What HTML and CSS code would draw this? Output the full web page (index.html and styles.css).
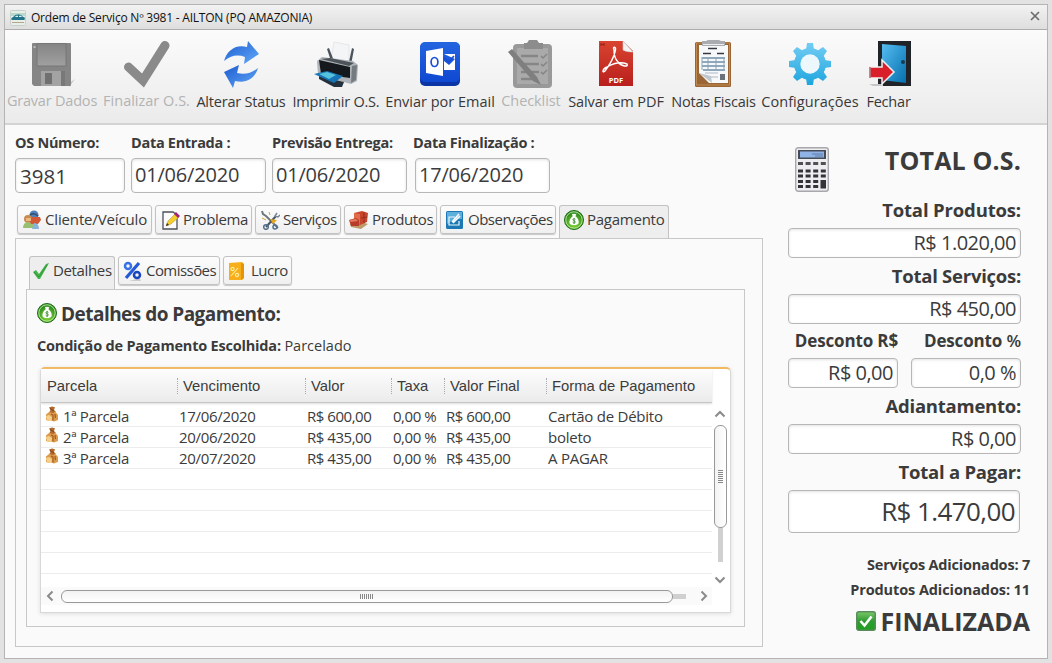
FILE: index.html
```html
<!DOCTYPE html>
<html lang="pt-BR">
<head>
<meta charset="utf-8">
<title>Ordem de Serviço Nº 3981</title>
<link rel="stylesheet" href="styles.css">
</head>
<body>
<svg width="0" height="0" class="defs" aria-hidden="true">
  <defs>
    <linearGradient id="gray" x1="0" y1="0" x2="0" y2="1"><stop offset="0" stop-color="#858585"/><stop offset="1" stop-color="#a0a0a0"/></linearGradient>
    <linearGradient id="blue" x1="0" y1="0" x2="1" y2="1"><stop offset="0" stop-color="#1c5bd0"/><stop offset="1" stop-color="#63aaf8"/></linearGradient>
    <linearGradient id="outlook" x1="0" y1="0" x2="0" y2="1"><stop offset="0" stop-color="#2465df"/><stop offset="1" stop-color="#1048d2"/></linearGradient>
    <linearGradient id="red" x1="0" y1="0" x2="0" y2="1"><stop offset="0" stop-color="#d9442f"/><stop offset="1" stop-color="#b81f1d"/></linearGradient>
    <linearGradient id="sky" gradientUnits="userSpaceOnUse" x1="0" y1="3" x2="0" y2="45"><stop offset="0" stop-color="#73cdf3"/><stop offset="1" stop-color="#1ea5de"/></linearGradient>
    <linearGradient id="door" x1="0" y1="0" x2="1" y2="1"><stop offset="0" stop-color="#55bdf0"/><stop offset="1" stop-color="#066fae"/></linearGradient>
    <radialGradient id="green" cx=".5" cy=".7" r=".6"><stop offset="0" stop-color="#8ede3c"/><stop offset="1" stop-color="#26851c"/></radialGradient>
    <linearGradient id="check" x1="0" y1="0" x2="0" y2="1"><stop offset="0" stop-color="#7cc86a"/><stop offset=".5" stop-color="#2f9c33"/><stop offset="1" stop-color="#1fa01f"/></linearGradient>
    <symbol id="money" viewBox="0 0 20 20">
      <circle cx="10" cy="10" r="9.5" fill="url(#green)" stroke="#1c6a1a"/>
      <circle cx="10" cy="10" r="8.2" fill="none" stroke="#c5eda0" stroke-width=".9"/>
      <path d="M7.7 3.6 9 4.2 10 3.4 11.2 4.2 12.5 3.6 11.5 6.2 C14 8 15 10.5 14.6 13 C14.2 15.7 5.8 15.7 5.5 13 C5.1 10.5 6.2 8 8.7 6.2Z" fill="#fff"/>
      <path d="M11.4 9.3C10.9 8.5 9 8.6 8.9 9.7C8.8 11 11.5 10.6 11.4 12C11.3 13.2 9.1 13.2 8.6 12.2M10.1 8v6" fill="none" stroke="#3f8e35" stroke-width=".9"/>
    </symbol>
    <symbol id="bag" viewBox="0 0 14 16">
      <path d="M4 1.5 7 .5 10 1.2 9 4 11 6 8 7.5 4 6.5 5.5 4Z" fill="#b4682a"/>
      <path d="M1 8.5 4 6 8 7 10.5 6 13 9 13 14 9 15.5 5 14 4 15 1 14Z" fill="#dc9b4c"/>
      <path d="M1 10 4 9 7 11 6.5 15 2 14.5Z" fill="#f4d08a"/>
      <path d="M6 8 8 9 8 14.5M10 8 10.5 12" fill="none" stroke="#a65a22" stroke-width="1.2"/>
      <path d="M5 2.5 9 5" stroke="#7c431b" stroke-width="1"/>
    </symbol>
  </defs>
</svg>

<div class="window">
  <header class="titlebar">
    <svg class="app-icon" viewBox="0 0 16 16"><rect x=".5" y=".5" width="15" height="15" rx="1" fill="#e8eee8" stroke="#c9cfc9"/><path d="M0 3h16v3H0z" fill="#bcd8cc"/><path d="M1 9C2 7 4 7 5 5.3C7 4.2 11 4.3 12.5 6.5L15 7.8 14.5 10H2Z" fill="#23748a"/><path d="M5 7 6 5.8H8V7ZM9 5.8h2L12 7H9Z" fill="#d5f2f0"/><path d="M2 12.5h12" stroke="#b5a68f"/></svg>
    <span class="title">Ordem de Serviço Nº 3981 - AILTON (PQ AMAZONIA)</span>
    <svg class="close" viewBox="0 0 10 10"><path d="M1 1 9 9M9 1 1 9" stroke="#6c6c6c" stroke-width="1.7"/></svg>
  </header>

  <nav class="toolbar">
    <a class="tool off">
      <svg viewBox="0 0 48 48"><path d="M40 44 47 39 41 47Z" fill="#c6c6c6"/><path d="M4 4Q4 3 5 3H42Q43 3 43 4V45Q43 46 42 46H6L4 44Z" fill="#858585"/><path d="M9 3.5H38V26H9Z" fill="url(#gray)" stroke="#777"/><path d="M13 31H33V46H13Z" fill="#a3a3a3"/><path d="M17 33h7v11h-7z" fill="#707070"/><path d="M33 31h4v15h-4z" fill="#787878"/><path d="M5.5 6h2v2h-2z" fill="#bbb"/></svg>
      <span class="t1">Gravar Dados</span></a>
    <a class="tool off">
      <svg viewBox="0 0 48 48"><path d="M5.500 27 20 40.500 42 5.500" fill="none" stroke="#8a8a8a" stroke-width="9" stroke-linecap="round" stroke-linejoin="miter"/></svg>
      <span class="t2">Finalizar O.S.</span></a>
    <a class="tool">
      <svg viewBox="0 0 48 48"><path d="M7 21C10 11 18 4 30 7L31 1 42 14 27 24 28 17C20 14 13 16 7 21Z" fill="url(#blue)"/><path d="M41 28C38 38 30 44 18 41L16 48 7 32 22 25 20 33C28 35 35 33 41 28Z" fill="url(#blue)"/></svg>
      <span class="t3">Alterar Status</span></a>
    <a class="tool">
      <svg viewBox="0 0 48 48"><path d="M22 2 37 5 37 26 19 20Z" fill="#f4f5f7" stroke="#d9dce0" stroke-width=".6"/><path d="M15 9 17 8 22 21 19 21ZM40 8 42 9 39 25 36 26Z" fill="#4b535b"/><path d="M5 21 10 17 41 21 46 25 45 41 39 44 6 35Z" fill="#aeb4b9"/><path d="M7 20 38 27 38 38 9 34Z" fill="#15191d"/><path d="M9 19 37 26 42 23 18 18Z" fill="#4c5359"/><path d="M40 26 45 25 44 40 39 43Z" fill="#747b81"/><path d="M7 36 32 42 30 47 22 47 7 39Z" fill="#24313c"/><path d="M2 34 15 31 31 36 22 43Z" fill="#1774b4"/><path d="M7 34 15 32 24 35 17 39Z" fill="#55c2dd"/></svg>
      <span class="t4">Imprimir O.S.</span></a>
    <a class="tool">
      <svg viewBox="0 0 48 48"><rect x="4" y="3" width="40" height="43" rx="5" fill="#0b35a4"/><rect x="4" y="2" width="40" height="40" rx="5" fill="url(#outlook)"/><path d="M10 11 27 8V36L10 33Z" fill="#fff"/><path d="M28 14H39V30H28V21L33 25 39 19" fill="#fff"/><path d="M28 17.500 32.500 22 38 16" fill="none" stroke="#174fd6" stroke-width="1.700"/><ellipse cx="18.500" cy="22" rx="3.400" ry="4.500" fill="none" stroke="#174fd6" stroke-width="1.700"/></svg>
      <span class="t5">Enviar por Email</span></a>
    <a class="tool off">
      <svg viewBox="0 0 48 48"><rect x="6" y="4" width="39" height="44" rx="4" fill="#999"/><rect x="10" y="8" width="31" height="36" fill="#aaa"/><path d="M17 3H20L22 0H30L32 3H36V9H17Z" fill="#8c8c8c"/><path d="M14 16H31M14 24H32M14 32H32M14 39H25" stroke="#868686" stroke-width="2.500"/><path d="M34 16 36 18 40 14M34 24 36 26 40 22M34 32 36 34 40 30" stroke="#858585" fill="none" stroke-width="1.500"/><path d="M1 12 5 9 30 37 34 45 26 41Z" fill="#7f7f7f"/></svg>
      <span class="t6">Checklist</span></a>
    <a class="tool">
      <svg viewBox="0 0 48 48"><path d="M7 1H31L41 11V46H7Z" fill="url(#red)"/><path d="M31 1 41 12Q34 12 31 10Z" fill="#f3f3f3" stroke="#ccc" stroke-width=".6"/><path d="M9 6V3.500L10.500 5 12 3.500V6" fill="none" stroke="#8b1c1a"/><path d="M22 10C20 6 25 6 23 12C21 20 16 27 13 31C10 34 10 29 15 27C22 23 30 22 35 24C37 27 30 27 26 22C22 18 22 14 22 10Z" fill="none" stroke="#fff" stroke-width="1.400"/><text x="24" y="43" class="pdf" text-anchor="middle">PDF</text></svg>
      <span class="t7">Salvar em PDF</span></a>
    <a class="tool">
      <svg viewBox="0 0 48 48"><rect x="5" y="2" width="36" height="45" rx="1.500" fill="#9b6635"/><rect x="6.500" y="3" width="33" height="42" fill="none" stroke="#c18a51"/><path d="M9 5H38V43H19L9 33Z" fill="#f7f8fa"/><path d="M12 1H16L18 0H29L31 1H35V6H12Z" fill="#a9abb0"/><path d="M13 4.500h21" stroke="#eee"/><path d="M18 8.500H27M13 13.500H21M27 13.500H34" stroke="#343a42" stroke-width="1.600"/><path d="M12 18H35M12 22H35M12 26H35M13 30H35" stroke="#6f8da7" stroke-width="1.500"/><path d="M12 17V30M18 17V31M26 17V31M34 17V31" stroke="#8ba5ba"/><path d="M15 33H28M19 37H28" stroke="#b1bac4"/><path d="M9 33 21 36 22 43Z" fill="#bfc6cc"/><path d="M30 34h5v6h-5z" fill="#6c7279"/></svg>
      <span class="t8">Notas Fiscais</span></a>
    <a class="tool">
      <svg viewBox="0 0 48 48"><g fill="url(#sky)"><circle cx="24" cy="24" r="16"/><path d="M21 3H27L28 10H20ZM20 38H28L27 45H21ZM3 21 10 20V28L3 27ZM38 20 45 21V27L38 28Z"/><path d="M7 11 11 7 17 11 11 17ZM37 7 41 11 37 17 31 11ZM41 37 37 41 31 37 37 31ZM11 41 7 37 11 31 17 37Z"/></g><circle cx="24" cy="24" r="9.700" fill="#edf8fd"/></svg>
      <span class="t9">Configurações</span></a>
    <a class="tool">
      <svg viewBox="0 0 48 48"><path d="M13 1H46V46H13Z" fill="#202328"/><path d="M17 4 41 6V43L17 40Z" fill="url(#door)"/><circle cx="38" cy="22" r="2" fill="#173b50"/><path d="M4 44H18V46H8Z" fill="#c5c5c5"/><path d="M5 27H17V20L29 32 17 44V38H5Z" fill="#d9202a" stroke="#f1f1f1" stroke-width="1.500"/><path d="M5 27V38" stroke="#901a20"/></svg>
      <span class="t10">Fechar</span></a>
  </nav>

  <main class="content">
    <section class="left">
      <div class="fields">
        <label class="field f1"><span>OS Número:</span><b class="input">3981</b></label>
        <label class="field f2"><span>Data Entrada :</span><b class="input">01/06/2020</b></label>
        <label class="field f3"><span>Previsão Entrega:</span><b class="input">01/06/2020</b></label>
        <label class="field f4"><span>Data Finalização :</span><b class="input">17/06/2020</b></label>
      </div>

      <div class="tabs main-tabs">
        <div class="tab m1"><svg viewBox="0 0 20 20"><circle cx="12" cy="5" r="4.500" fill="#4e82bd"/><circle cx="6" cy="9" r="4" fill="#c78b4d"/><path d="M1 18Q1 12 7 12T13 18Z" fill="#98bf70"/><path d="M7 10 10 7H18L19 10 16 14H9Z" fill="#d25836"/><path d="M4 8h5v3H4z" fill="#e8b985"/><path d="M12 13Q17 13 17 19H10Z" fill="#8ab2d8"/><path d="M8 5Q12 2 16 6" stroke="#354b68" stroke-width="1.500" fill="none"/></svg><span>Cliente/Veículo</span></div>
        <div class="tab m2"><svg viewBox="0 0 20 20"><path d="M3 2H13L17 5V19H3Z" fill="#fcfcff" stroke="#4d5058" stroke-width="1.300"/><path d="M6 16 8 11 15 4 19 7 11 14Z" fill="#f4ce2d" stroke="#af8c24" stroke-width=".5"/><path d="M14 4 16 2 20 6 18 8Z" fill="#9e247e"/><path d="M6 16 7 13 9 15Z" fill="#333"/></svg><span>Problema</span></div>
        <div class="tab m3"><svg viewBox="0 0 20 20"><path d="M2 1 3 4 6 6 18 18" stroke="#6f7880" stroke-width="2" fill="none"/><path d="M6 17 16 6" stroke="#4c5661" stroke-width="2"/><path d="M17 3 15 6 18 7 20 5" fill="none" stroke="#758494" stroke-width="1.500"/><path d="M10 9 17 10 13 14Z" fill="#e4a622"/><circle cx="6" cy="17" r="2.300" fill="none" stroke="#54708f" stroke-width="1.500"/><circle cx="15" cy="17" r="2" fill="none" stroke="#54708f" stroke-width="1.500"/><path d="M2 8 6 10M9 2 10 5" stroke="#caa24a"/></svg><span>Serviços</span></div>
        <div class="tab m4"><svg viewBox="0 0 20 20"><path d="M1 14 9 11 19 14 12 19 2 17Z" fill="#bd9a69"/><path d="M5 3 13 1 19 3 18 12 11 15 5 11Z" fill="#c8452d"/><path d="M5 3 11 4 11 14 5 11Z" fill="#e16b4a"/><path d="M0 10 7 8 10 10V16L2 16Z" fill="#b83c29"/><path d="M0 10 7 9 9 11 2 12Z" fill="#e27a5e"/><path d="M12 8 18 7M15 2V13" stroke="#93301f"/></svg><span>Produtos</span></div>
        <div class="tab m5"><svg viewBox="0 0 20 20"><rect x="1" y="1" width="17" height="18" rx="1.500" fill="#1c78b5"/><path d="M2 2H17V9Q8 9 2 14Z" fill="#5db0dc"/><path d="M14 11V15H4V7H10M5 15" fill="none" stroke="#e9f5fc" stroke-width="1.200"/><path d="M7 12 14 4M8 13 15 6" stroke="#fff" stroke-width="1.500"/></svg><span>Observações</span></div>
        <div class="tab m6 active"><svg><use href="#money"/></svg><span>Pagamento</span></div>
      </div>

      <div class="panel">
        <div class="tabs sub-tabs">
          <div class="tab s1 active"><svg viewBox="0 0 20 20"><path d="M1 11 4 9 7 13 14 3 17 2 8 18 6 18Z" fill="#46b449"/><path d="M2 11 7 16 15 4" stroke="#2a9039" fill="none" stroke-width=".8"/></svg><span>Detalhes</span></div>
          <div class="tab s2"><svg viewBox="0 0 20 20"><path d="M6 20H18L17 17Z" fill="#cdcdd0"/><circle cx="5" cy="5" r="3" fill="none" stroke="#3871e5" stroke-width="2.500"/><circle cx="14" cy="14" r="3" fill="none" stroke="#1746be" stroke-width="2.500"/><path d="M3 17 16 2" stroke="#245ad5" stroke-width="3.200"/></svg><span>Comissões</span></div>
          <div class="tab s3"><svg viewBox="0 0 20 20"><path d="M1 2 14 1 16 3V17L14 19H1Z" fill="#f8ae1b"/><path d="M13 2 16 3V17L13 19Z" fill="#e49406"/><g fill="none" stroke="#fff0a0" stroke-width="1.100"><circle cx="4.500" cy="8" r="1.600"/><circle cx="9" cy="14" r="1.600"/><path d="M3 15 10 7"/></g></svg><span>Lucro</span></div>
        </div>

        <div class="subpanel">
          <h2 class="heading"><svg><use href="#money"/></svg><span>Detalhes do Pagamento:</span></h2>
          <p class="condition"><strong>Condição de Pagamento Escolhida:</strong> <span>Parcelado</span></p>

          <div class="table">
            <div class="grid-area">
              <div class="row head"><span>Parcela</span><span>Vencimento</span><span>Valor</span><span>Taxa</span><span>Valor Final</span><span>Forma de Pagamento</span></div>
              <div class="rows">
                <div class="row"><span><svg><use href="#bag"/></svg>1ª Parcela</span><span>17/06/2020</span><span class="money">R$ 600,00</span><span class="money">0,00 %</span><span class="money">R$ 600,00</span><span>Cartão de Débito</span></div>
                <div class="row"><span><svg><use href="#bag"/></svg>2ª Parcela</span><span>20/06/2020</span><span class="money">R$ 435,00</span><span class="money">0,00 %</span><span class="money">R$ 435,00</span><span>boleto</span></div>
                <div class="row"><span><svg><use href="#bag"/></svg>3ª Parcela</span><span>20/07/2020</span><span class="money">R$ 435,00</span><span class="money">0,00 %</span><span class="money">R$ 435,00</span><span>A PAGAR</span></div>
                <div class="row"></div><div class="row"></div><div class="row"></div><div class="row"></div><div class="row"></div>
              </div>
              <div class="hscroll">
                <svg class="arrow" viewBox="0 0 10 12"><path d="M7.500 1.500 3 6 7.500 10.500" class="chev"/></svg>
                <div class="hthumb"><i class="grip"></i></div><div class="htrack"></div>
                <svg class="arrow" viewBox="0 0 10 12"><path d="M2.500 1.500 7 6 2.500 10.500" class="chev"/></svg>
              </div>
            </div>
            <div class="vscroll">
              <svg class="varrow" viewBox="0 0 12 8"><path d="M1.500 6.500 6 2 10.500 6.500" class="chev"/></svg>
              <div class="vthumb"><i class="grip"></i></div><div class="vtrack"></div>
              <svg class="varrow" viewBox="0 0 12 8"><path d="M1.500 1.500 6 6 10.500 1.500" class="chev"/></svg>
            </div>
          </div>
        </div>
      </div>
    </section>

    <aside class="totals">
      <div class="total-head">
        <svg viewBox="0 0 34 45"><rect x=".7" y=".7" width="32.600" height="43.600" rx="2.500" fill="#eeeef0" stroke="#a8a8ac" stroke-width="1.400"/><rect x="3" y="3" width="28" height="9" fill="#454b57"/><rect x="5" y="4.500" width="24" height="6" fill="#8fb3e4"/><path d="M17 7H28M20 9H28" stroke="#506d9a" stroke-width=".8"/><path d="M3 16.500H31" stroke="#505055" stroke-width="3" stroke-dasharray="5 2.600"/><path d="M3 24H31M3 29H31M3 34.500H24M3 39.500H24" stroke="#333338" stroke-width="3.200" stroke-dasharray="5 2.600"/><rect x="25.500" y="33" width="5.500" height="8.500" fill="#333338"/></svg>
        <h1>TOTAL O.S.</h1>
      </div>
      <div class="lbl l1">Total Produtos:</div>
      <div class="input num">R$ 1.020,00</div>
      <div class="lbl l2">Total Serviços:</div>
      <div class="input num">R$ 450,00</div>
      <div class="pair lbl-pair"><div class="small-lbl">Desconto R$</div><div class="small-lbl">Desconto <span class="pct">%</span></div></div>
      <div class="pair"><div class="input num">R$ 0,00</div><div class="input num">0,0 %</div></div>
      <div class="lbl l3">Adiantamento:</div>
      <div class="input num">R$ 0,00</div>
      <div class="lbl l4">Total a Pagar:</div>
      <div class="input num big">R$ 1.470,00</div>
      <div class="added a1">Serviços Adicionados: 7</div>
      <div class="added a2">Produtos Adicionados: 11</div>
      <div class="status"><svg viewBox="0 0 20 20"><rect x=".7" y=".7" width="18.600" height="18.600" rx="2" fill="url(#check)" stroke="#5b8a5b" stroke-width="1.400"/><path d="M4.500 10 8.500 14.500 15.500 5.500" fill="none" stroke="#fff" stroke-width="2.600"/></svg><span>FINALIZADA</span></div>
    </aside>
  </main>
</div>
</body>
</html>
```
FILE: styles.css
```css
* { box-sizing: border-box; }
body {
  margin: 0;
  height: 663px;
  padding: 4px;
  background: #e2e2e2;
  color: #3b3b3b;
  font-family: "Open Sans", "Noto Sans", sans-serif;
  overflow: hidden;
}
.defs { display: block; position: absolute; }
h1, h2, p { margin: 0; }
span, .lbl, .added, .input { white-space: nowrap; }

.window {
  width: 1044px;
  height: 655px;
  border: 1px solid #b4b4b4;
  background: #fafafa;
}
.titlebar {
  display: flex;
  align-items: center;
  height: 25px;
  padding: 1px 4px 0 5px;
  border-bottom: 1px solid #adadad;
  background: linear-gradient(#f2f2f2, #dedede);
}
.app-icon { width: 16px; height: 16px; }
.title { margin-left: 5px; font-size: 12px; color: #111; letter-spacing: -0.22px; }
.close { width: 10px; height: 10px; margin-left: auto; margin-right: 3px; margin-bottom: 3px; }

.toolbar {
  display: grid;
  grid-template-columns: 90px 85px 90px 86px 108px 60px 96px 85px 96px 45px;
  column-gap: 7px;
  height: 95px;
  padding: 10px 0 0 2px;
  border-bottom: 2px solid #d3d3d3;
  background: linear-gradient(#fbfbfb, #ebebeb);
}
.tool { display: flex; flex-direction: column; align-items: center; }
.tool svg { width: 48px; height: 48px; flex: none; }
.tool span { margin-top: 3px; font-size: 14.5px; line-height: 22px; color: #383838; letter-spacing: -0.2px; }
.tool.off span { color: #b3b3b3; margin-top: 2px; }
.tool .t2, .tool .t5 { letter-spacing: 0; }
.tool .t6, .tool .t7 { letter-spacing: -0.08px; }
.tool .t9 { letter-spacing: 0.05px; margin-left: -2px; }
.tool:nth-child(9) svg { margin-left: -3px; }
.pdf { font: bold 7.5px "Open Sans", sans-serif; fill: #fff; }

.content { display: flex; padding-left: 10px; }
.left { width: 748px; }
.fields { display: flex; padding-top: 7px; }
.field { display: block; }
.field span { display: block; height: 26px; font-size: 14.5px; font-weight: 700; line-height: 21px; letter-spacing: -0.3px; }
.f1 { width: 110px; }
.f2, .f3 { width: 135px; margin-left: 6px; }
.f4 { width: 135px; margin-left: 8px; }
.f4 span { margin-left: -2px; }
.input {
  display: block;
  border: 1px solid #b7b7b7;
  border-radius: 4px;
  background: #fff;
  box-shadow: inset 0 1px 3px #e2e2e2;
  font-weight: 400;
}
.field .input { height: 35px; padding-left: 3px; font-size: 20px; line-height: 31px; letter-spacing: -0.2px; }
.f1 .input { padding-left: 4px; font-size: 20.5px; line-height: 34px; letter-spacing: 0; }

.tabs { display: flex; column-gap: 3px; position: relative; }
.main-tabs { height: 33px; margin: 12px 0 0 2px; }
.tab {
  display: flex;
  align-items: center;
  height: 29px;
  padding-left: 4px;
  border: 1px solid #c2c2c2;
  border-radius: 3px;
  background: linear-gradient(#fcfcfc, #f0f0f0);
  box-shadow: 0 1px 1px #c8c8c8;
  font-size: 15px;
  letter-spacing: -0.35px;
}
.tab span { padding-bottom: 2px; }
.tab svg { width: 20px; height: 20px; flex: none; margin-right: 3px; }
.tab.active { height: 33px; padding-bottom: 4px; background: #eee; border-bottom: 0; border-radius: 3px 3px 0 0; box-shadow: none; }
.m1 { width: 135px; letter-spacing: -0.15px; }
.m2 { width: 97px; }
.m3 { width: 86px; letter-spacing: -0.45px; }
.m4 { width: 93px; }
.m5 { width: 116px; letter-spacing: -0.5px; }
.m6 { width: 110px; letter-spacing: -0.25px; }
.panel { width: 748px; height: 409px; border: 1px solid #c8c8c8; padding: 17px 0 0 10px; }
.sub-tabs { height: 33px; padding-left: 3px; }
.s1 { width: 86px; padding-left: 2px; }
.s1 svg { margin-right: 1px; }
.s2 { width: 102px; letter-spacing: -0.55px; }
.s3 { width: 69px; letter-spacing: -0.5px; }
.subpanel { width: 719px; height: 338px; border: 1px solid #c8c8c8; padding: 13px 0 0 13px; }
.heading { display: flex; align-items: center; height: 20px; margin-left: -3px; font-size: 19px; letter-spacing: -0.53px; }
.heading svg { width: 20px; height: 20px; margin-right: 4px; }
.heading span { padding-top: 1px; }
.condition { height: 44px; margin-left: -3px; padding-top: 12px; font-size: 14.5px; line-height: 21px; letter-spacing: -0.2px; }
.condition span { letter-spacing: 0; }

.table {
  display: flex;
  width: 691px;
  height: 246px;
  border: 1px solid #d8d8d8;
  border-top: 2px solid #f3b961;
  border-radius: 5px 5px 0 0;
  background: #fff;
  box-shadow: 0 1px 4px #ddd;
}
.grid-area { width: 671px; }
.row { display: grid; grid-template-columns: 136px 128px 86px 53px 102px 165px; height: 21px; border-bottom: 1px solid #ececec; font-size: 15px; line-height: 21px; letter-spacing: -0.3px; }
.row span { padding-left: 2px; }
.row .money { letter-spacing: -0.47px; }
.row span:last-child { letter-spacing: -0.25px; }
.rows .row span:first-child { display: flex; padding-left: 4px; }
.row svg { width: 14px; height: 16px; margin-right: 4px; }
.row.head { height: 34px; align-items: center; border-bottom: 1px solid #c5c5c5; background: linear-gradient(#fdfdfd, #ebebeb); box-shadow: 0 1px 2px #ddd; font: 14.8px "Liberation Sans", Arial, sans-serif; letter-spacing: 0; }
.row.head span { padding: 0 0 0 5px; line-height: 16px; border-left: 1px dotted #aaa; letter-spacing: 0; }
.row.head span:first-child { border-left: 0; padding-left: 6px; }
.rows { padding-top: 3px; }
.hscroll { display: flex; align-items: center; height: 18px; margin-top: 13px; background: #fafafa; }
.arrow { width: 10px; height: 12px; margin-left: 4px; }
.chev { fill: none; stroke: #8a8a8a; stroke-width: 2; }
.hthumb { display: flex; align-items: center; justify-content: center; width: 612px; height: 13px; margin-left: 6px; border: 1px solid #999; border-radius: 6px; background: linear-gradient(#f3f3f3, #fff); }
.grip { display: block; width: 14px; height: 5px; background: repeating-linear-gradient(90deg, #888 0 1px, transparent 1px 2px); }
.htrack { width: 13px; height: 5px; background: #d0d0d0; }
.hscroll .arrow:last-child { margin-left: 13px; }
.vscroll { display: flex; flex-direction: column; align-items: center; width: 16px; padding-top: 41px; }
.varrow { width: 12px; height: 8px; flex: none; }
.vthumb { display: flex; align-items: center; justify-content: center; width: 13px; height: 103px; margin-top: 7px; border: 1px solid #999; border-radius: 6px; background: linear-gradient(90deg, #f3f3f3, #fff); flex: none; }
.vthumb .grip { width: 5px; height: 14px; background: repeating-linear-gradient(#888 0 1px, transparent 1px 2px); }
.vtrack { width: 5px; height: 34px; background: #d0d0d0; flex: none; margin-bottom: 14px; }

.totals { width: 243px; margin-left: 25px; padding: 22px 10px 0 0; text-align: right; }
.total-head { display: flex; justify-content: space-between; padding-left: 7px; height: 50px; }
.total-head svg { width: 34px; height: 45px; }
h1 { font-size: 25px; line-height: 27px; letter-spacing: 0.15px; }
.lbl { height: 31px; font-size: 18.5px; font-weight: 700; line-height: 26px; letter-spacing: -0.25px; }
.l1 { letter-spacing: -0.15px; }
.num { height: 30px; padding-right: 4px; font-size: 20px; line-height: 28px; letter-spacing: -0.5px; margin-bottom: 5px; }
.pair { display: flex; justify-content: space-between; }
.pair .num { width: 110px; }
.lbl-pair { height: 29px; }
.small-lbl { width: 110px; font-size: 17px; font-weight: 700; line-height: 24px; letter-spacing: -0.15px; }
.pct { font-weight: 600; }
.num.big { height: 43px; width: 232px; font-size: 26px; line-height: 41px; letter-spacing: -0.6px; }
.added { height: 25px; margin-right: -9px; font-size: 14.5px; font-weight: 700; line-height: 25px; letter-spacing: -0.2px; }
.a1 { margin-top: 19px; }
.a2 { letter-spacing: -0.1px; }
.status { display: flex; justify-content: flex-end; align-items: center; height: 38px; margin-right: -9px; font-size: 25px; font-weight: 700; }
.status svg { width: 20px; height: 20px; margin-right: 5px; }
```
